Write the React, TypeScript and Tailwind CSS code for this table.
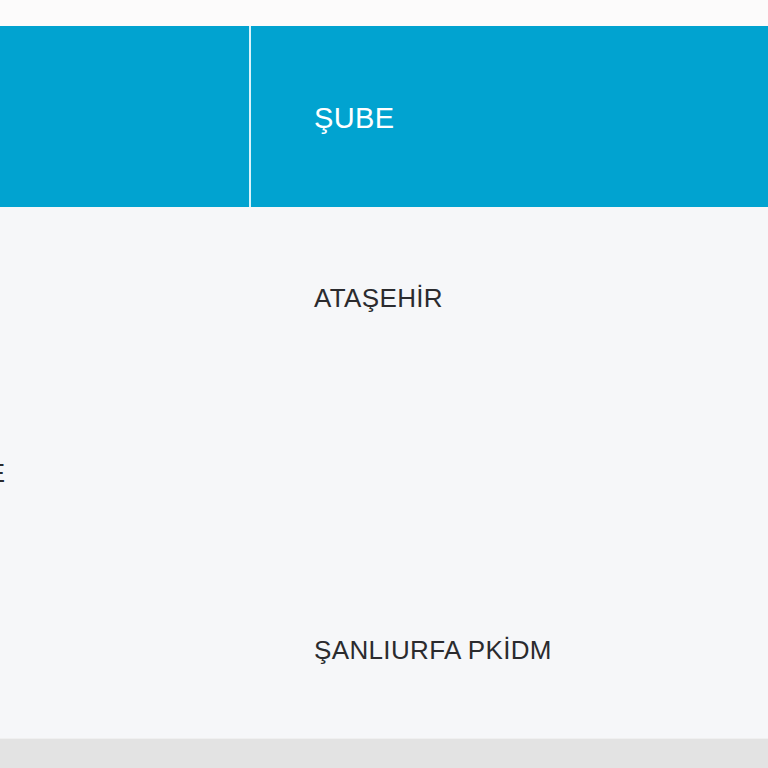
import React from 'react';

const rows = ['ATAŞEHİR', 'ŞANLIURFA PKİDM'];

const App: React.FC = () => {
  return (
    <div className="w-[768px] h-[768px] overflow-hidden bg-[#fbfbfb] flex flex-col font-['Liberation_Sans',Arial,sans-serif]">
      <div className="h-[26px] shrink-0 bg-[#fcfbfb]" />

      <div className="h-[181px] shrink-0 flex bg-[#01a3d0]">
        <div className="w-[249px] shrink-0" />
        <div className="w-[2px] shrink-0 bg-[#d8f3fb]" />
        <div className="flex-1 flex items-center pl-[63px] pt-[3px]">
          <span className="text-[29px] leading-none tracking-[0.4px] text-white">ŞUBE</span>
        </div>
      </div>

      <div className="h-[531px] shrink-0 flex bg-[#f6f7f9] text-[#2b2b2e] overflow-hidden">
        <div className="w-[251px] shrink-0 flex items-center overflow-hidden">
          <div className="w-[5px] flex justify-end">
            <span className="text-[26px] leading-none whitespace-nowrap">MÜDÜRLÜĞE</span>
          </div>
        </div>
        <div className="flex-1 flex flex-col">
          {rows.map(r => (
            <div key={r} className="h-[352px] shrink-0 pt-[78px] pl-[63px]">
              <span className="text-[26px] leading-none tracking-[0.35px] whitespace-nowrap">{r}</span>
            </div>
          ))}
        </div>
      </div>

      <div className="flex-1 bg-[#e3e3e3] border-t border-[#f0f0f0]" />
    </div>
  );
};

export default App;
